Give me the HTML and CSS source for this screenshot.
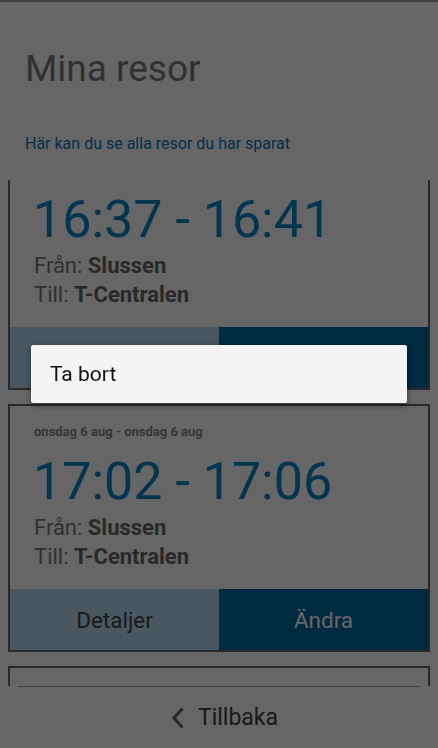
FILE: index.html
```html
<!DOCTYPE html>
<html lang="sv">
<head>
<meta charset="utf-8">
<title>Mina resor</title>
<link rel="stylesheet" href="styles.css">
</head>
<body>
<div class="app">
  <header class="header">
    <h1 class="title">Mina resor</h1>
    <p class="subtitle">Här kan du se alla resor du har sparat</p>
  </header>
  <main class="list">
    <article class="card">
      <div class="card-body">
        <div class="date">onsdag 6 aug - onsdag 6 aug</div>
        <div class="time">16:37 - 16:41</div>
        <div class="stop">Från: <b>Slussen</b></div>
        <div class="stop">Till: <b>T-Centralen</b></div>
      </div>
      <div class="actions">
        <button class="btn btn-light">Detaljer</button>
        <button class="btn btn-dark">Ändra</button>
      </div>
    </article>
    <article class="card">
      <div class="card-body">
        <div class="date">onsdag 6 aug - onsdag 6 aug</div>
        <div class="time">17:02 - 17:06</div>
        <div class="stop">Från: <b>Slussen</b></div>
        <div class="stop">Till: <b>T-Centralen</b></div>
      </div>
      <div class="actions">
        <button class="btn btn-light">Detaljer</button>
        <button class="btn btn-dark">Ändra</button>
      </div>
    </article>
    <article class="card">
      <div class="card-body">
        <div class="date">onsdag 6 aug - onsdag 6 aug</div>
        <div class="time">17:32 - 17:36</div>
        <div class="stop">Från: <b>Slussen</b></div>
        <div class="stop">Till: <b>T-Centralen</b></div>
      </div>
      <div class="actions">
        <button class="btn btn-light">Detaljer</button>
        <button class="btn btn-dark">Ändra</button>
      </div>
    </article>
  </main>
  <footer class="footer">
    <a class="back" href="#">
      <svg class="chev" width="14" height="22" viewBox="0 0 14 22"><polyline points="11.5,1.5 3,11 11.5,20.5" fill="none" stroke="#666" stroke-width="3.2" stroke-linecap="butt" stroke-linejoin="miter"/></svg>
      <span>Tillbaka</span>
    </a>
  </footer>
</div>
<div class="overlay"></div>
<div class="menu">
  <div class="menu-item">Ta bort</div>
</div>
<script src="scroll.js"></script>
</body>
</html>
```
FILE: styles.css
```css
* { box-sizing: border-box; }
html, body { margin: 0; padding: 0; }
body {
  width: 438px;
  height: 748px;
  overflow: hidden;
  background: #fff;
  font-family: Roboto, "Noto Sans", "Liberation Sans", sans-serif;
}
.app {
  height: 748px;
  display: flex;
  flex-direction: column;
  border-top: 2px solid #999;
}
.header {
  padding: 0 25px;
}
.title {
  margin: 45px 0 0;
  font-size: 37px;
  line-height: 44px;
  font-weight: 400;
  color: #7a7a7a;
}
.subtitle {
  margin: 43px 0 0;
  font-size: 16px;
  line-height: 20px;
  color: #0a78b8;
}
.list {
  margin-top: 26px;
  height: 506px;
  overflow: hidden;
  display: flex;
  flex-direction: column;
  gap: 14px;
}
.card {
  flex: none;
  margin: 0 8px;
  border: 2px solid #666;
  display: flex;
  flex-direction: column;
}
.card-body {
  padding: 17.5px 24px 18px;
}
.date {
  font-size: 13px;
  line-height: 16px;
  font-weight: 700;
  color: #8a8a8a;
}
.time {
  margin-top: 12.5px;
  margin-left: -1px;
  font-size: 52px;
  line-height: 60px;
  color: #0a85c6;
}
.time + .stop { margin-top: 1px; }
.stop {
  font-size: 22px;
  line-height: 29px;
  color: #7c7c7c;
}
.stop b {
  font-weight: 700;
  color: #666;
}
.actions {
  display: flex;
  height: 61px;
}
.btn {
  flex: 1;
  border: 0;
  margin: 0;
  font-family: inherit;
  font-size: 22.5px;
  padding: 0;
}
.btn-light {
  background: #b9daf2;
  color: #404040;
}
.btn-dark {
  background: #0069a0;
  color: #fff;
}
.footer {
  flex: 1;
  margin: 0 18px;
  border-top: 1px solid #aaa;
  display: flex;
  align-items: center;
  justify-content: center;
  padding-left: 11px;
}
.back {
  display: flex;
  align-items: center;
  gap: 13px;
  text-decoration: none;
  color: #3e3e3e;
  font-size: 23px;
}
.chev { display: block; }
.overlay {
  position: fixed;
  inset: 0;
  background: rgba(0, 0, 0, 0.6);
}
.menu {
  position: fixed;
  left: 31px;
  top: 345px;
  width: 376px;
  height: 58px;
  background: #f4f4f4;
  border-radius: 2px;
  box-shadow: 0 2px 6px rgba(0, 0, 0, 0.5);
  display: flex;
  align-items: center;
}
.menu-item {
  padding-left: 19px;
  font-size: 21px;
  color: #111;
}
```
FILE: scroll.js
```js
document.querySelector('.list').scrollTop = 38;
```
